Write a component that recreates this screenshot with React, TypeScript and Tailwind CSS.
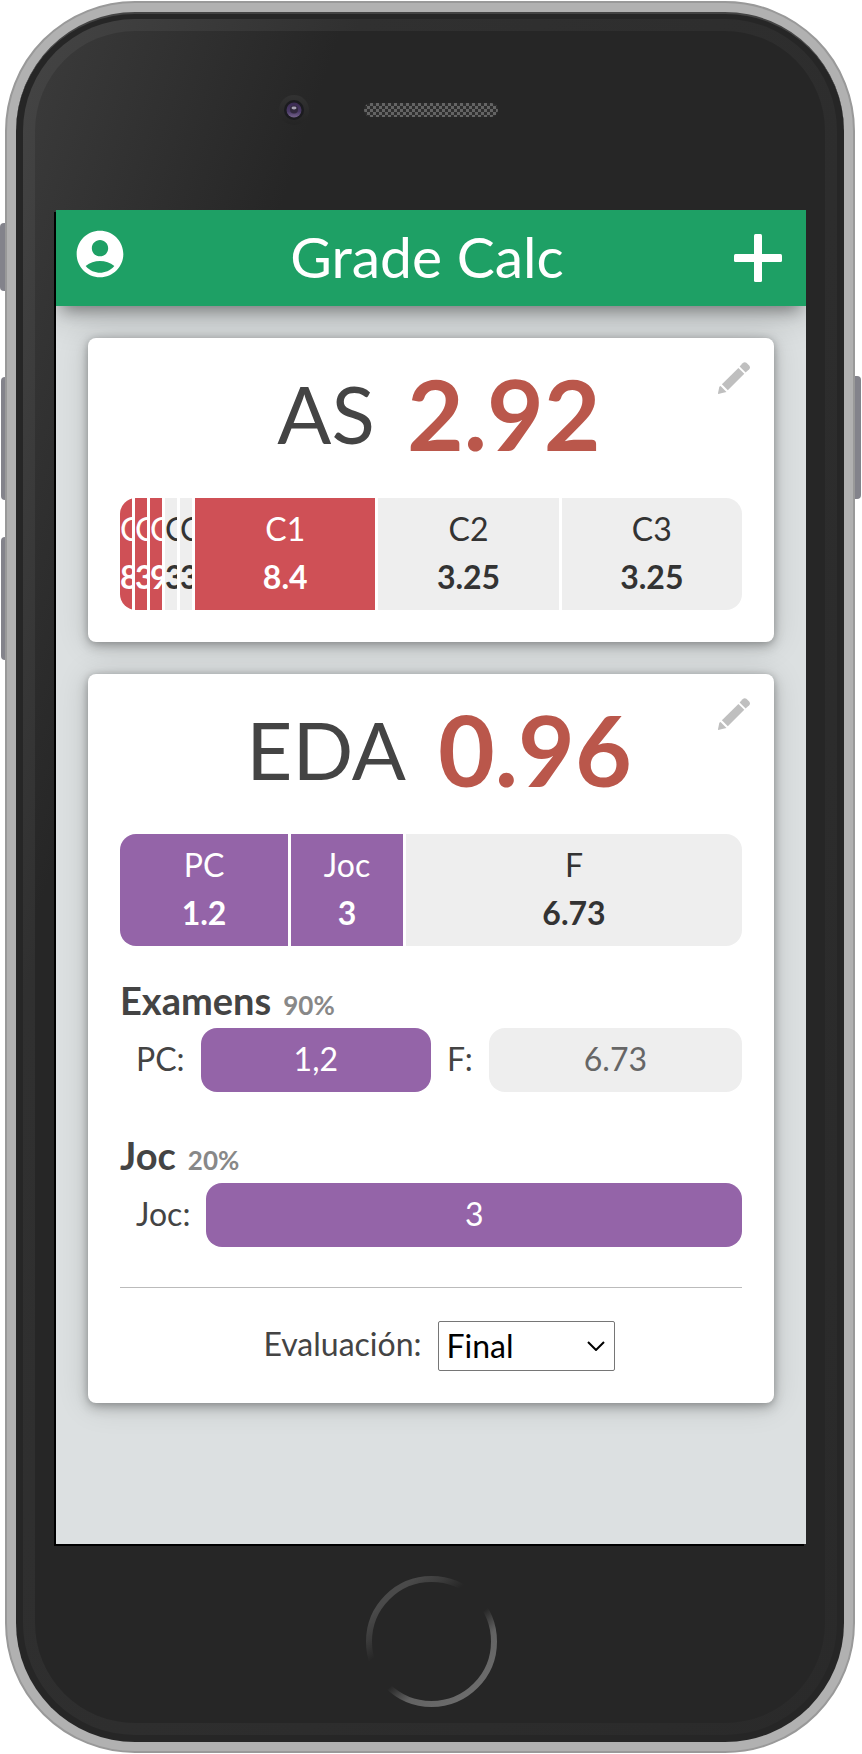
import { useId, useState } from "react";
import { MdAccountCircle } from "react-icons/md";

type Segment = { label: string; value: string; weight: number; tone: "red" | "purple" | "empty" };

const tones = {
  red: "bg-[#cf5056] text-white",
  purple: "bg-[#9464a8] text-white",
  empty: "bg-[#eeeeee] text-[#333333]",
};

const asSegments: Segment[] = [
  { label: "C", value: "8", weight: 1, tone: "red" },
  { label: "C", value: "3", weight: 1, tone: "red" },
  { label: "C", value: "9", weight: 1, tone: "red" },
  { label: "C", value: "3", weight: 1, tone: "empty" },
  { label: "C", value: "3", weight: 1, tone: "empty" },
  { label: "C1", value: "8.4", weight: 15, tone: "red" },
  { label: "C2", value: "3.25", weight: 15, tone: "empty" },
  { label: "C3", value: "3.25", weight: 15, tone: "empty" },
];

const edaSegments: Segment[] = [
  { label: "PC", value: "1.2", weight: 3, tone: "purple" },
  { label: "Joc", value: "3", weight: 2, tone: "purple" },
  { label: "F", value: "6.73", weight: 6, tone: "empty" },
];

function Pencil() {
  return (
    <svg viewBox="0 0 32 32" className="size-8" fill="currentColor" aria-hidden="true">
      <path d="M21.6 4.6 24.6 1.3Q26.4-.6 28.4.8L31.2 3.6Q32.7 5.4 31.2 7.2L27.6 10.4Z" />
      <path d="M20.4 5.9 26.3 11.7 9.8 28.2 3.9 22.3Z" />
      <path d="M2.6 23.9 8.5 30Q4 30.9 .3 32 0 31.9 0 31.3Q.8 27.500 1.300 24.800Z" />
    </svg>
  );
}

function Camera() {
  return (
    <svg viewBox="0 0 30 30" className="mr-[55px] size-[30px] justify-self-end" aria-hidden="true">
      <defs>
        <linearGradient id="cam-rim" x1="0" y1="0" x2="0" y2="1">
          <stop offset="0" stopColor="#323232" />
          <stop offset="1" stopColor="#242424" />
        </linearGradient>
        <linearGradient id="cam-lens" x1="0" y1="0" x2="0" y2="1">
          <stop offset="0" stopColor="#3a2a52" />
          <stop offset="0.6" stopColor="#4a3a66" />
          <stop offset="1" stopColor="#75638c" />
        </linearGradient>
      </defs>
      <circle cx="15" cy="15" r="15" fill="url(#cam-rim)" />
      <circle cx="15" cy="15" r="10" fill="#1b1b1f" />
      <circle cx="15" cy="15" r="7.500" fill="url(#cam-lens)" />
      <circle cx="15" cy="14.500" r="4" fill="#30283c" />
      <ellipse cx="15" cy="13" rx="2.500" ry="1.400" fill="#a9a3b5" />
    </svg>
  );
}

function Speaker() {
  return (
    <svg viewBox="0 0 134 14" className="h-[14px] w-[134px]" aria-hidden="true">
      <defs>
        <pattern id="mesh" width="6" height="6" patternUnits="userSpaceOnUse">
          <rect width="6" height="6" fill="#2e2e2e" />
          <rect width="3" height="3" fill="#646464" />
          <rect x="3" y="3" width="3" height="3" fill="#646464" />
        </pattern>
      </defs>
      <rect width="134" height="14" rx="7" fill="url(#mesh)" />
    </svg>
  );
}

function HomeRing() {
  return (
    <svg viewBox="0 0 131 131" className="size-[131px]" aria-hidden="true">
      <defs>
        <linearGradient id="home" gradientUnits="userSpaceOnUse" x1="24.500" y1="15" x2="106.500" y2="116">
          <stop offset="0.04" stopColor="#4a4a4a" />
          <stop offset="0.18" stopColor="#3c3c3c" />
          <stop offset="0.32" stopColor="#262626" />
          <stop offset="0.57" stopColor="#262626" />
          <stop offset="0.74" stopColor="#626262" />
          <stop offset="1" stopColor="#6c6c6c" />
        </linearGradient>
      </defs>
      <circle cx="65.500" cy="65.500" r="62.500" fill="none" stroke="url(#home)" strokeWidth="6" />
    </svg>
  );
}

function GradeBar({ segments }: { segments: Segment[] }) {
  return (
    <div className="flex gap-[3px] overflow-hidden rounded-2xl text-center text-[32px] leading-[48px]">
      {segments.map((s, i) => (
        <div
          key={i}
          className={`min-w-0 basis-0 overflow-hidden pt-[7px] pb-[9px] whitespace-nowrap ${tones[s.tone]}`}
          style={{ flexGrow: s.weight }}
        >
          <div>{s.label}</div>
          <div className="font-bold">{s.value}</div>
        </div>
      ))}
    </div>
  );
}

function CardHeading({ name, grade }: { name: string; grade: string }) {
  return (
    <>
      <h2 className="flex h-40 items-center justify-center gap-8 pb-[10px] pl-4 leading-none">
        <span className="text-[80px] font-normal text-[#444444]">{name}</span>
        <span className="text-[98px] font-bold text-[#ba574b]">{grade}</span>
      </h2>
      <button type="button" aria-label={`Editar ${name}`} className="absolute top-6 right-6 text-[#bfbfbf]">
        <Pencil />
      </button>
    </>
  );
}

function GradeInput({ label, initial, placeholder }: { label: string; initial?: string; placeholder?: string }) {
  const id = useId();
  const [value, setValue] = useState(initial ?? "");
  return (
    <div className="flex min-w-0 flex-1 items-center gap-4 pl-4">
      <label htmlFor={id} className="pb-[3px]">{label}:</label>
      <input
        id={id}
        inputMode="decimal"
        value={value}
        placeholder={placeholder}
        onChange={(e) => setValue(e.target.value)}
        className={`h-16 w-0 min-w-0 flex-1 rounded-2xl pb-[3px] text-center placeholder:text-[#666666] ${
          value ? "bg-[#9464a8] text-white" : "bg-[#eeeeee] text-[#333333]"
        }`}
      />
    </div>
  );
}

function SectionTitle({ name, share }: { name: string; share: string }) {
  return (
    <h3 className="flex items-baseline gap-3 pb-[6px] text-[38px] leading-[44px] font-bold">
      {name}
      <span className="text-[26px] leading-8 font-bold text-[#888888]">{share}</span>
    </h3>
  );
}

const cardClass =
  "relative rounded-lg bg-white px-8 pb-8 text-[#444444] shadow-[0_4px_12px_rgba(0,0,0,0.28),0_2px_32px_rgba(0,0,0,0.14),0_0_6px_rgba(0,0,0,0.12)]";

export default function App() {
  return (
    <div className="bg-white pt-px pr-[7px] pb-px pl-[5px] font-['Lato','Open_Sans',sans-serif]">
      <div className="relative">
        <div className="absolute top-[222px] -left-[5px] h-[68px] w-[6px] rounded-l-[4px] bg-[#83838b]" />
        <div className="absolute top-[376px] -left-[4px] h-[123px] w-[5px] rounded-l-[4px] bg-[#83838b]" />
        <div className="absolute top-[536px] -left-[4px] h-[123px] w-[5px] rounded-l-[4px] bg-[#83838b]" />
        <div className="absolute top-[375px] -right-[6px] h-[123px] w-[7px] rounded-r-[4px] bg-[#83838b]" />
        <div className="relative rounded-[130px] border-2 border-[#999999] bg-[#b1b1b1] p-[9px]">
          <div className="rounded-[119px] border-t-2 border-[#444444] bg-[#262626] px-[7px] pt-[5px] pb-[7px]">
            <div className="rounded-[112px] bg-[linear-gradient(109deg,#454545_0px,#303030_320px,#2a2a2a_100%)] p-[12px]">
              <div className="rounded-[100px] bg-[linear-gradient(109deg,#3b3b3b_0px,#262626_290px)] pr-[19px] pl-[21px]">
                <div className="grid h-[179px] grid-cols-[1fr_auto_1fr] items-center pb-[22px]">
                  <Camera />
                  <Speaker />
                </div>

                <div className="flex aspect-[750/1334] flex-col overflow-hidden bg-[#dce0e1] shadow-[-2px_2px_0_#000000]">
                  <header className="flex h-24 items-center bg-[#1ea065] px-4 text-white shadow-[0_10px_16px_-6px_rgba(0,0,0,0.4),0_12px_36px_0_rgba(0,0,0,0.15)]">
                    <button type="button" aria-label="Cuenta" className="-mt-2">
                      <MdAccountCircle className="size-14" />
                    </button>
                    <h1 className="flex-1 pb-1 text-center text-[57px] leading-none">Grade Calc</h1>
                    <button type="button" aria-label="Añadir" className="px-2">
                      <svg viewBox="0 0 48 48" className="size-12" fill="currentColor" aria-hidden="true">
                        <rect x="20" width="8" height="48" rx="1.500" />
                        <rect y="20" width="48" height="8" rx="1.500" />
                      </svg>
                    </button>
                  </header>

                  <main className="flex flex-col gap-8 p-8 text-[32px]">
                    <section className={cardClass}>
                      <CardHeading name="AS" grade="2.92" />
                      <GradeBar segments={asSegments} />
                    </section>

                    <section className={cardClass}>
                      <CardHeading name="EDA" grade="0.96" />
                      <GradeBar segments={edaSegments} />

                      <div className="mt-8">
                        <SectionTitle name="Examens" share="90%" />
                        <div className="flex">
                          <GradeInput label="PC" initial="1,2" />
                          <GradeInput label="F" placeholder="6.73" />
                        </div>
                      </div>

                      <div className="mt-[41px]">
                        <SectionTitle name="Joc" share="20%" />
                        <div className="flex">
                          <GradeInput label="Joc" initial="3" />
                        </div>
                      </div>

                      <hr className="mt-10 mb-8 border-[#bbbbbb]" />

                      <div className="flex items-center justify-center gap-4 pl-4">
                        <label htmlFor="evaluation" className="pb-[3px]">Evaluación:</label>
                        <div className="relative">
                          <select
                            id="evaluation"
                            className="block h-[50px] w-[177px] appearance-none rounded-[2px] border border-[#767676] bg-white px-2 text-black"
                          >
                            <option>Final</option>
                          </select>
                          <svg
                            viewBox="0 0 18 10"
                            className="pointer-events-none absolute top-5 right-[10px] h-[10px] w-[18px]"
                            fill="none"
                            stroke="#000000"
                            strokeWidth="2"
                            aria-hidden="true"
                          >
                            <path d="M1 1 9 9 17 1" />
                          </svg>
                        </div>
                      </div>
                    </section>
                  </main>
                </div>

                <div className="flex justify-center pt-8 pb-4">
                  <HomeRing />
                </div>
              </div>
            </div>
          </div>
        </div>
      </div>
    </div>
  );
}
